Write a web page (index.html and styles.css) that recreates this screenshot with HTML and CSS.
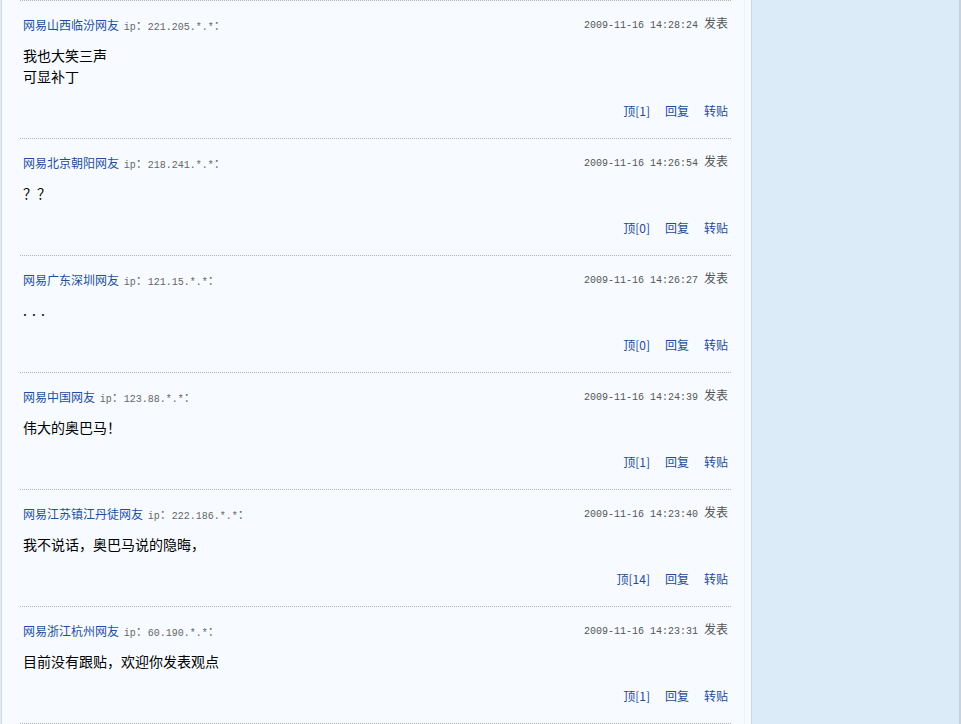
FILE: index.html
```html
<!DOCTYPE html>
<html lang="zh-CN">
<head>
  <meta charset="UTF-8">
  <title>跟贴</title>
  <link rel="stylesheet" href="styles.css">
</head>
<body>
  <div class="page">
    <div class="main">
      <div class="reply">
        <div class="reply-head">
          <span class="reply-time">2009-11-16 14:28:24 <em>发表</em></span>
          <a href="#" class="author">网易山西临汾网友</a> <span class="ip">ip<i>：</i>221.205.*.*<i>：</i></span>
        </div>
        <div class="reply-body">我也大笑三声<br>可显补丁</div>
        <div class="reply-ops"><a href="#">顶[1]</a><a href="#">回复</a><a href="#">转贴</a></div>
      </div>

      <div class="reply">
        <div class="reply-head">
          <span class="reply-time">2009-11-16 14:26:54 <em>发表</em></span>
          <a href="#" class="author">网易北京朝阳网友</a> <span class="ip">ip<i>：</i>218.241.*.*<i>：</i></span>
        </div>
        <div class="reply-body">？？</div>
        <div class="reply-ops"><a href="#">顶[0]</a><a href="#">回复</a><a href="#">转贴</a></div>
      </div>

      <div class="reply">
        <div class="reply-head">
          <span class="reply-time">2009-11-16 14:26:27 <em>发表</em></span>
          <a href="#" class="author">网易广东深圳网友</a> <span class="ip">ip<i>：</i>121.15.*.*<i>：</i></span>
        </div>
        <div class="reply-body dots">. . .</div>
        <div class="reply-ops"><a href="#">顶[0]</a><a href="#">回复</a><a href="#">转贴</a></div>
      </div>

      <div class="reply">
        <div class="reply-head">
          <span class="reply-time">2009-11-16 14:24:39 <em>发表</em></span>
          <a href="#" class="author">网易中国网友</a> <span class="ip">ip<i>：</i>123.88.*.*<i>：</i></span>
        </div>
        <div class="reply-body">伟大的奥巴马！</div>
        <div class="reply-ops"><a href="#">顶[1]</a><a href="#">回复</a><a href="#">转贴</a></div>
      </div>

      <div class="reply">
        <div class="reply-head">
          <span class="reply-time">2009-11-16 14:23:40 <em>发表</em></span>
          <a href="#" class="author">网易江苏镇江丹徒网友</a> <span class="ip">ip<i>：</i>222.186.*.*<i>：</i></span>
        </div>
        <div class="reply-body">我不说话，奥巴马说的隐晦，</div>
        <div class="reply-ops"><a href="#">顶[14]</a><a href="#">回复</a><a href="#">转贴</a></div>
      </div>

      <div class="reply">
        <div class="reply-head">
          <span class="reply-time">2009-11-16 14:23:31 <em>发表</em></span>
          <a href="#" class="author">网易浙江杭州网友</a> <span class="ip">ip<i>：</i>60.190.*.*<i>：</i></span>
        </div>
        <div class="reply-body">目前没有跟贴，欢迎你发表观点</div>
        <div class="reply-ops"><a href="#">顶[1]</a><a href="#">回复</a><a href="#">转贴</a></div>
      </div>

      <div class="reply-end"></div>
    </div>
    <div class="side"></div>
  </div>
</body>
</html>
```

FILE: styles.css
```css
* {
  box-sizing: border-box;
}

html, body {
  height: 100%;
}

body {
  margin: 0;
  background: #dcebf8;
  font-family: "Noto Sans CJK SC", "Liberation Sans", sans-serif;
  font-size: 12px;
  color: #000;
  overflow: hidden;
}

.page {
  display: flex;
  height: 100%;
  padding-left: 1px;
}

.main {
  width: 751px;
  flex-shrink: 0;
  background: #f7fbff;
  border-left: 1px solid #dadde0;
  border-right: 1px solid #cfd9e3;
  padding: 0 20px 0 18px;
  box-shadow: inset -6px 0 0 #f7fbff, inset -7px 0 0 #eef3f8;
}

.side {
  flex: 1;
  border-right: 2px solid #c9d2da;
}

.reply {
  border-top: 1px dotted #b4b4b4;
  padding: 15px 3px 18px 3px;
}

.reply-end {
  border-top: 1px dotted #b4b4b4;
}

.reply-head {
  height: 18px;
  line-height: 18px;
  white-space: nowrap;
}

.author {
  color: #1d4fa0;
  text-decoration: none;
  font-size: 12px;
  margin-right: 2px;
}

.ip {
  font-family: "Liberation Mono", monospace;
  font-size: 10px;
  color: #666;
}

.ip i {
  font-style: normal;
  font-family: "Noto Sans CJK SC", sans-serif;
  font-size: 12px;
}

.reply-time {
  float: right;
  margin-top: -2px;
  font-family: "Liberation Mono", monospace;
  font-size: 10px;
  color: #555;
}

.reply-time em {
  font-style: normal;
  font-family: "Noto Sans CJK SC", sans-serif;
  font-size: 12px;
}

.reply-body {
  margin-top: 11px;
  font-size: 14px;
  line-height: 21px;
  color: #000;
}

.dots {
  letter-spacing: 1px;
}

.reply-ops {
  margin-top: 15px;
  height: 18px;
  line-height: 18px;
  display: flex;
  justify-content: flex-end;
  gap: 15px;
}

.reply-ops a {
  color: #1d4a9c;
  text-decoration: none;
  font-size: 12px;
}
```
